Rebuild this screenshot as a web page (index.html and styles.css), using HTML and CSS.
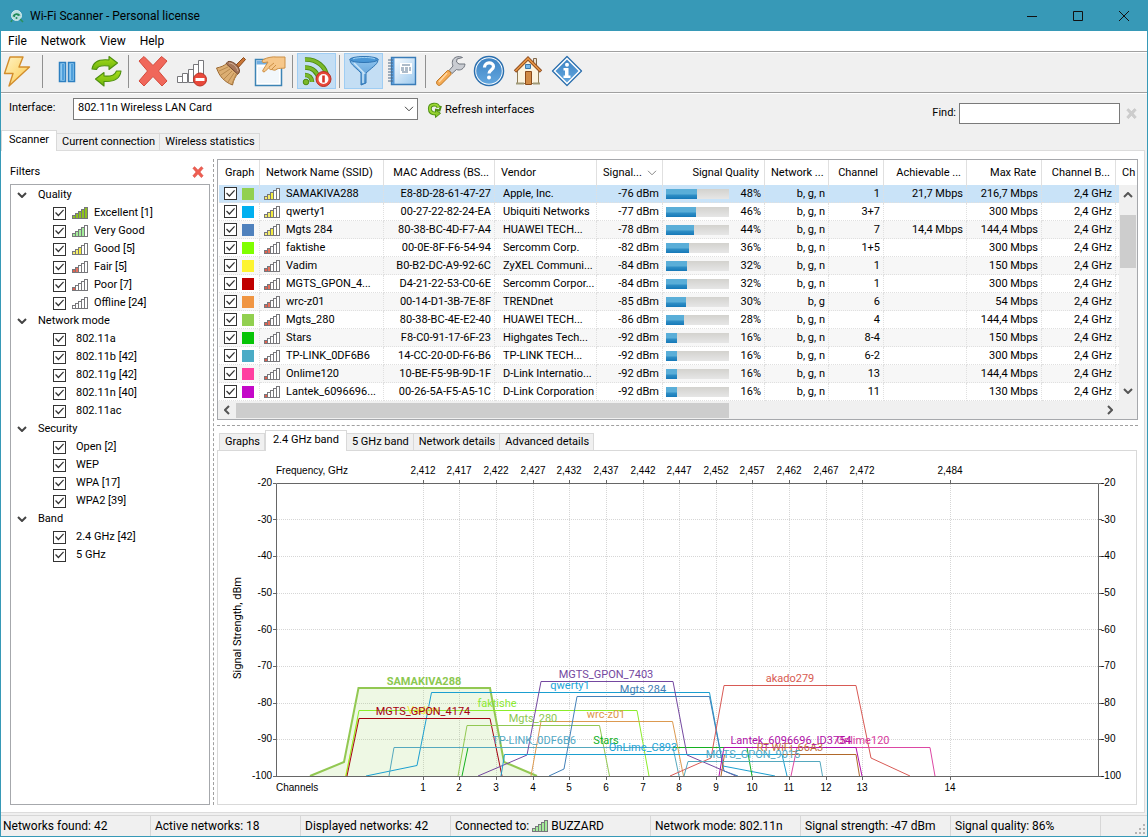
FILE: index.html
```html
<!DOCTYPE html>
<html lang="en">
<head>
<meta charset="utf-8">
<meta name="viewport" content="width=device-width, initial-scale=1">
<title>Wi-Fi Scanner - Personal license</title>
<link rel="stylesheet" href="styles.css">
</head>
<body>
<svg class="defs" width="0" height="0" aria-hidden="true">
  <defs>
    <linearGradient id="g-gold" x1="0" y1="0" x2="1" y2="1"><stop offset="0" stop-color="#fff3c4"/><stop offset="1" stop-color="#fbc848"/></linearGradient>
    <linearGradient id="g-blue" x1="0" y1="0" x2="0" y2="1"><stop offset="0" stop-color="#8fc4ee"/><stop offset="1" stop-color="#4f94d0"/></linearGradient>
    <linearGradient id="g-deep" x1="0" y1="0" x2="0" y2="1"><stop offset="0" stop-color="#3f84c4"/><stop offset="1" stop-color="#62a6de"/></linearGradient>
    <linearGradient id="g-green" x1="0" y1="0" x2="0" y2="1"><stop offset="0" stop-color="#a6dc1c"/><stop offset="1" stop-color="#6fb50c"/></linearGradient>
    <linearGradient id="g-page" x1="0" y1="0" x2="1" y2="1"><stop offset="0" stop-color="#fff"/><stop offset="1" stop-color="#9cc9ee"/></linearGradient>
    <symbol id="bars" viewBox="0 0 16 12">
      <g stroke="#77777b" stroke-width="1">
        <rect class="b1" x=".5" y="8.5" width="3" height="3"/>
        <rect class="b2" x="3.500" y="6.500" width="3" height="5"/>
        <rect class="b3" x="6.500" y="4.500" width="3" height="7"/>
        <rect class="b4" x="9.500" y="2.500" width="3" height="9"/>
        <rect class="b5" x="12.500" y=".5" width="3" height="11"/>
      </g>
    </symbol>
    <symbol id="cross" viewBox="0 0 32 32"><path d="M2 6 7 1.500l9 9 8.500-9L30 6l-8.500 10L30 26l-5 5-9-9.500L7 31l-5-5 8.500-10z" stroke-linejoin="round"/></symbol>
    <symbol id="chev" viewBox="0 0 10 6"><path d="M1 1l4 4 4-4" fill="none" stroke="currentColor" stroke-width="2"/></symbol>
    <symbol id="chev-thin" viewBox="0 0 10 6"><path d="M1 .8l4 4 4-4" fill="none" stroke="currentColor" stroke-width="1"/></symbol>
  </defs>
</svg>

<div class="window">
  <header class="titlebar">
    <svg class="app-icon" viewBox="0 0 14 14" aria-hidden="true"><circle cx="6.500" cy="6.500" r="5" fill="#b9dfe0" stroke="#d5ecef"/><path d="M3 7.500a4 4 0 0 1 7-1M4.500 8a2 2 0 0 1 4-1" fill="none" stroke="#1f8a58" stroke-width="1.200"/><circle cx="6.500" cy="9" r="1" fill="#1f8a58"/><path d="M2 11l-1 2M10 10l3 3" stroke="#2a8f5c" stroke-width="1.600"/></svg>
    <h1 class="title">Wi-Fi Scanner - Personal license</h1>
    <div class="caption-buttons">
      <button type="button" aria-label="Minimize"><svg width="12" height="12" viewBox="0 0 12 12"><path d="M1 6.500h10"/></svg></button>
      <button type="button" aria-label="Maximize"><svg width="12" height="12" viewBox="0 0 12 12"><path d="M1.500 1.500h9v9h-9z"/></svg></button>
      <button type="button" aria-label="Close"><svg width="12" height="12" viewBox="0 0 12 12"><path d="M1 1l10 10M11 1L1 11"/></svg></button>
    </div>
  </header>

  <nav class="menubar" aria-label="Main menu">
    <button type="button">File</button><button type="button">Network</button><button type="button">View</button><button type="button">Help</button>
  </nav>

  <div class="toolbar" role="toolbar" aria-label="Tools">
    <button type="button" class="tool first" aria-label="Start scan">
      <svg viewBox="0 0 32 32"><path d="M9 2h13l-4 10h10.500L8 31l4-12.500H3.500z" fill="url(#g-gold)" stroke="#d28d2c" stroke-width="1.400" stroke-linejoin="round"/></svg></button>
    <span class="sep"></span>
    <button type="button" class="tool" aria-label="Pause">
      <svg viewBox="0 0 32 32"><path d="M8.500 7.500h6v19h-6zM17.500 7.500h6v19h-6z" fill="#8cc8f0" stroke="#2d7fc0" stroke-width="1.500"/><path d="M12 9v16M21 9v16" stroke="#4f9fdb" stroke-width="2"/></svg></button>
    <button type="button" class="tool" aria-label="Refresh">
      <svg viewBox="0 0 32 32"><g fill="url(#g-green)" stroke="#4e8f0e" stroke-width="1.100" stroke-linejoin="round"><path d="M2 14C3 7 9 4 19 5V1.500L27.500 8 19 14.500V11C11 10 7.500 11 6.500 14.500z"/><path d="M31 16c-1 8-8 11-17 10.500V31l-8.500-7L14 17.500V21c8 .5 11-1 12.500-5z"/></g></svg></button>
    <span class="sep"></span>
    <button type="button" class="tool" aria-label="Delete"><svg viewBox="0 0 32 32" fill="#f0675a" stroke="#d44a3c" stroke-width="1"><use href="#cross"/></svg></button>
    <button type="button" class="tool" aria-label="Remove offline networks">
      <svg viewBox="0 0 32 32"><g fill="#fff" stroke="#77777b"><path d="M1.500 21.500h5v6h-5zM6.500 18.500h5v9h-5zM12.500 14.500h5v13h-5zM17.500 9.500h5v18h-5zM22.500 5.500h5v22h-5z"/></g><circle cx="24" cy="24.500" r="6.500" fill="#e8483a" stroke="#bc3124"/><path d="M19.500 23h9v3h-9z" fill="#fff"/></svg></button>
    <button type="button" class="tool" aria-label="Clear">
      <svg viewBox="0 0 32 32"><path d="M20 11 28.500 2.500l2 2L22 14z" fill="#c87536" stroke="#8a4a1c"/><path d="M12 8c-3 3-6 4-10.500 5 2 5 3 7 6 10.500 3 3 6 5 10 6.500 1-5 3-9 6-12z" fill="#dcae72" stroke="#9d6a32"/><path d="M4 16l9-4M6 20l9-6M9 24l8-8M13 27l6-9M17 29l4-10" stroke="#b8894e" fill="none"/><path d="M13 6.500c-1 1-1.500 1.500-1.500 2.500l11 10c1-.5 2-1.500 2-2.500.5-5-6.500-11-11.500-10z" fill="#a5765a" stroke="#71452c"/><path d="M14 8c4 0 8 4 9 8" stroke="#d8b49c" fill="none"/></svg></button>
    <button type="button" class="tool" aria-label="Properties">
      <svg viewBox="0 0 32 32"><path d="M1.500 4.500h26v26h-26z" fill="#fff" stroke="#3c84b5" stroke-width="1.500"/><path d="M2.500 5.500h24v4h-24z" fill="#72aee0"/><path d="M4 12h21v16H4z" fill="#f2f7fb"/><path d="M31 2v11c-3 .5-6 0-8 1-1.500 1.500-3 1.500-5 .5-2 .5-3-.5-3-2l-4 4c-1.500 1-3 0-2-1.500l5-8c-1 0-4 .8-5 .5-1.500-.5-1-2.500.5-3C13 2.500 19 1.500 22 2z" fill="#f6c78a" stroke="#cc8f45"/><path d="M15 12l5-4M18 14l4-4" stroke="#cc8f45" fill="none"/></svg></button>
    <span class="sep"></span>
    <button type="button" class="tool on" aria-pressed="true" aria-label="Live signal">
      <svg viewBox="0 0 32 32"><g fill="none" stroke="#4c8a10" stroke-width="4.600"><path d="M4 4.500C16 4 25 12 26 22"/><path d="M4 12.500c8 0 13 5 14 13"/><path d="M4 20c4 0 7 3 7 7"/></g><g fill="none" stroke="#79b82a" stroke-width="3"><path d="M4 4.500C16 4 25 12 26 22"/><path d="M4 12.500c8 0 13 5 14 13"/><path d="M4 20c4 0 7 3 7 7"/></g><circle cx="5" cy="27" r="2.800" fill="#79b82a" stroke="#4c8a10"/><circle cx="22.500" cy="24" r="7.500" fill="#e8483a" stroke="#b92d22"/><circle cx="22.500" cy="24" r="5" fill="#fff"/><path d="M21.200 20.500h2.600v7h-2.600z" fill="#d83327"/></svg></button>
    <span class="sep"></span>
    <button type="button" class="tool on" aria-pressed="true" aria-label="Filters">
      <svg viewBox="0 0 32 32"><path d="M2 4c0 5 3 6 11 14v12l5-2V18C27 10 30 9 30 4z" fill="url(#g-blue)" stroke="#2f74b3"/><path d="M6 8l10 10h-1V28" stroke="#cde6f8" stroke-width="1.500" fill="none"/><ellipse cx="16" cy="4.500" rx="14" ry="3" fill="#4a97d6" stroke="#2f74b3"/><path d="M5 3.800c6-1.800 17-1.800 22 0" stroke="#9ed0f2" fill="none"/></svg></button>
    <button type="button" class="tool" aria-label="Log">
      <svg viewBox="0 0 32 32"><path d="M4.500 2.500h24v27h-24z" fill="url(#g-page)" stroke="#3a7cb8" stroke-width="1.400"/><path d="M5 3h2.500v26H5z" fill="#5a9bd8"/><path d="M1 5h5M1 8h5M1 11h5M1 14h5M1 17h5M1 20h5M1 23h5M1 26h5" stroke="#4f6b86"/><path d="M13 8h12v11H13z" fill="#fff"/><path d="M15 10h8M14 13h3m1 0h3m1 0h2M14 15h3m1 0h3m1 0h2M15 17h6" stroke="#5c7894"/></svg></button>
    <span class="sep"></span>
    <button type="button" class="tool" aria-label="Settings">
      <svg viewBox="0 0 32 32"><path d="M28.500 2.500c-4-2-9-.5-10 3.500-.5 2 0 3.500.5 5l-4 4.500 3 3 4.500-4c3.500 1.500 8-.5 8.500-5.500h-6l-2.500-2 .5-3z" fill="#c9ccd2" stroke="#71767f"/><path d="M13.500 15.500c2 0 4 2 3.500 4L6.500 30c-2 1.500-5-1-3.500-4z" fill="#f5ab55" stroke="#bf7623"/><path d="M13 18L5 27" stroke="#ffd9a5" stroke-width="1.500"/></svg></button>
    <button type="button" class="tool" aria-label="Help">
      <svg viewBox="0 0 32 32"><circle cx="16" cy="16" r="14.500" fill="#fff" stroke="#2b6fae" stroke-width="1.500"/><circle cx="16" cy="16" r="12.800" fill="url(#g-deep)"/><path d="M11.500 12.500c0-6 9-6 9-1 0 3.500-4.500 3.500-4.500 7" fill="none" stroke="#fff" stroke-width="3.200"/><circle cx="16" cy="22.500" r="2" fill="#fff"/></svg></button>
    <button type="button" class="tool" aria-label="Home page">
      <svg viewBox="0 0 32 32"><path d="M21.500 3.500h3V12h-3z" fill="#e8dfd0" stroke="#80674a"/><path d="M5.500 14 16 4l10.500 10v14.500h-21z" fill="#fbf3df" stroke="#8e7a55"/><path d="M3 16.500 16 3.500l13 13" fill="none" stroke="#8c4b1f" stroke-width="3.400"/><path d="M3.500 16 16 3.500 28.500 16" fill="none" stroke="#e89543" stroke-width="1.600"/><path d="M13.500 9.500h5v4h-5z" fill="#78b7e8" stroke="#3a78aa"/><path d="M13.500 16.500h6v13h-6z" fill="#d08a45" stroke="#8a4b1b"/><path d="M4 28.500h8m9 0h7" stroke="#a09a78" stroke-width="2"/></svg></button>
    <button type="button" class="tool" aria-label="About">
      <svg viewBox="0 0 32 32"><path d="M16 1.500 30.500 16 16 30.500 1.500 16z" fill="#fff" stroke="#2b6fae" stroke-width="1.300" stroke-linejoin="round"/><path d="M16 4.500 27.500 16 16 27.500 4.500 16z" fill="url(#g-deep)"/><circle cx="16" cy="9.800" r="2" fill="#fff"/><path d="M12.500 13h5v7.500h2V23h-7v-2.500H14v-5h-1.500z" fill="#fff"/></svg></button>
  </div>

  <div class="ifacebar">
    <label for="iface" class="iface-label">Interface:</label>
    <div class="combo">
      <select id="iface"><option>802.11n Wireless LAN Card</option></select>
      <svg width="10" height="6" aria-hidden="true"><use href="#chev-thin"/></svg>
    </div>
    <button type="button" class="refresh">
      <svg width="15" height="16" viewBox="0 0 15 16" aria-hidden="true"><g fill="none" stroke="#4f8f14" stroke-width="3.800"><path d="M11.500 5.500C10.500 1.500 3 1.500 2.800 6.500c0 3 2 5 5.700 5"/></g><path d="M8 7.500l4.500 1 1.500-4.500" fill="none" stroke="#4f8f14" stroke-width="2"/><path d="M8.500 8v7.500l5-4.200z" fill="#8cc92a" stroke="#4f8f14" stroke-linejoin="round"/><path d="M11.500 5.500C10.500 1.500 3 1.500 2.800 6.500c0 3 2 5 6.200 5" fill="none" stroke="#9ad633" stroke-width="2"/></svg>
      Refresh interfaces</button>
    <label for="find" class="find-label">Find:</label>
    <input id="find" class="find" type="text">
    <button type="button" class="clear" aria-label="Clear search"><svg width="11" height="11" fill="#cdcdcd" stroke="#b9b9b9" stroke-width="1"><use href="#cross"/></svg></button>
  </div>

  <div class="tabs main-tabs" role="tablist">
    <button type="button" role="tab" aria-selected="true">Scanner</button><button type="button" role="tab" aria-selected="false">Current connection</button><button type="button" role="tab" aria-selected="false">Wireless statistics</button>
  </div>

  <main class="content">
    <aside class="filters">
      <div class="filters-head"><h2>Filters</h2><button type="button" aria-label="Close filters"><svg width="12" height="12" fill="#ee5e52" stroke="#cf463a" stroke-width="1"><use href="#cross"/></svg></button></div>
      <div class="tree">
        <div class="group"><svg width="10" height="6"><use href="#chev"/></svg>Quality</div>
        <label class="leaf"><input type="checkbox" checked><svg class="sig excellent"><use href="#bars"/></svg>Excellent [1]</label>
        <label class="leaf"><input type="checkbox" checked><svg class="sig verygood"><use href="#bars"/></svg>Very Good</label>
        <label class="leaf"><input type="checkbox" checked><svg class="sig good"><use href="#bars"/></svg>Good [5]</label>
        <label class="leaf"><input type="checkbox" checked><svg class="sig fair"><use href="#bars"/></svg>Fair [5]</label>
        <label class="leaf"><input type="checkbox" checked><svg class="sig poor"><use href="#bars"/></svg>Poor [7]</label>
        <label class="leaf"><input type="checkbox" checked><svg class="sig"><use href="#bars"/></svg>Offline [24]</label>
        <div class="group"><svg width="10" height="6"><use href="#chev"/></svg>Network mode</div>
        <label class="leaf plain"><input type="checkbox" checked>802.11a</label>
        <label class="leaf plain"><input type="checkbox" checked>802.11b [42]</label>
        <label class="leaf plain"><input type="checkbox" checked>802.11g [42]</label>
        <label class="leaf plain"><input type="checkbox" checked>802.11n [40]</label>
        <label class="leaf plain"><input type="checkbox" checked>802.11ac</label>
        <div class="group"><svg width="10" height="6"><use href="#chev"/></svg>Security</div>
        <label class="leaf plain"><input type="checkbox" checked>Open [2]</label>
        <label class="leaf plain"><input type="checkbox" checked>WEP</label>
        <label class="leaf plain"><input type="checkbox" checked>WPA [17]</label>
        <label class="leaf plain"><input type="checkbox" checked>WPA2 [39]</label>
        <div class="group"><svg width="10" height="6"><use href="#chev"/></svg>Band</div>
        <label class="leaf plain"><input type="checkbox" checked>2.4 GHz [42]</label>
        <label class="leaf plain"><input type="checkbox" checked>5 GHz</label>
      </div>
    </aside>

    <div class="vsplit"></div>

    <section class="detail">
      <div class="grid-box">
        <div class="grid-view">
          <table>
            <colgroup><col class="c-graph"><col class="c-ssid"><col class="c-mac"><col class="c-vendor"><col class="c-signal"><col class="c-quality"><col class="c-mode"><col class="c-channel"><col class="c-achiev"><col class="c-rate"><col class="c-band"><col></colgroup>
            <thead><tr><th>Graph</th><th>Network Name (SSID)</th><th class="r">MAC Address (BS...</th><th>Vendor</th><th><span class="sorted">Signal... <svg width="10" height="6"><use href="#chev-thin"/></svg></span></th><th class="r">Signal Quality</th><th class="r">Network ...</th><th class="r">Channel</th><th class="r">Achievable ...</th><th class="r">Max Rate</th><th class="r">Channel B...</th><th class="cut">Ch</th></tr></thead>
            <tbody>
              <tr class="selected"><td><span class="pick"><input type="checkbox" checked aria-label="SAMAKIVA288"><i class="sw green"></i></span></td><td><span class="name"><svg class="sig good"><use href="#bars"/></svg>SAMAKIVA288</span></td><td class="r">E8-8D-28-61-47-27</td><td>Apple, Inc.</td><td class="r">-76 dBm</td><td><span class="quality"><span class="track"><span class="fill" style="width:49%"></span></span>48%</span></td><td class="r">b, g, n</td><td class="r">1</td><td class="r">21,7 Mbps</td><td class="r">216,7 Mbps</td><td class="r">2,4 GHz</td><td></td></tr>
              <tr><td><span class="pick"><input type="checkbox" checked aria-label="qwerty1"><i class="sw sky"></i></span></td><td><span class="name"><svg class="sig good"><use href="#bars"/></svg>qwerty1</span></td><td class="r">00-27-22-82-24-EA</td><td>Ubiquiti Networks</td><td class="r">-77 dBm</td><td><span class="quality"><span class="track"><span class="fill" style="width:47%"></span></span>46%</span></td><td class="r">b, g, n</td><td class="r">3+7</td><td></td><td class="r">300 Mbps</td><td class="r">2,4 GHz</td><td></td></tr>
              <tr><td><span class="pick"><input type="checkbox" checked aria-label="Mgts 284"><i class="sw steel"></i></span></td><td><span class="name"><svg class="sig good"><use href="#bars"/></svg>Mgts 284</span></td><td class="r">80-38-BC-4D-F7-A4</td><td>HUAWEI TECH...</td><td class="r">-78 dBm</td><td><span class="quality"><span class="track"><span class="fill" style="width:44%"></span></span>44%</span></td><td class="r">b, g, n</td><td class="r">7</td><td class="r">14,4 Mbps</td><td class="r">144,4 Mbps</td><td class="r">2,4 GHz</td><td></td></tr>
              <tr><td><span class="pick"><input type="checkbox" checked aria-label="faktishe"><i class="sw lime"></i></span></td><td><span class="name"><svg class="sig fair"><use href="#bars"/></svg>faktishe</span></td><td class="r">00-0E-8F-F6-54-94</td><td>Sercomm Corp.</td><td class="r">-82 dBm</td><td><span class="quality"><span class="track"><span class="fill" style="width:36%"></span></span>36%</span></td><td class="r">b, g, n</td><td class="r">1+5</td><td></td><td class="r">300 Mbps</td><td class="r">2,4 GHz</td><td></td></tr>
              <tr><td><span class="pick"><input type="checkbox" checked aria-label="Vadim"><i class="sw yellow"></i></span></td><td><span class="name"><svg class="sig fair"><use href="#bars"/></svg>Vadim</span></td><td class="r">B0-B2-DC-A9-92-6C</td><td>ZyXEL Communi...</td><td class="r">-84 dBm</td><td><span class="quality"><span class="track"><span class="fill" style="width:33%"></span></span>32%</span></td><td class="r">b, g, n</td><td class="r">1</td><td></td><td class="r">150 Mbps</td><td class="r">2,4 GHz</td><td></td></tr>
              <tr><td><span class="pick"><input type="checkbox" checked aria-label="MGTS_GPON_4174"><i class="sw red"></i></span></td><td><span class="name"><svg class="sig fair"><use href="#bars"/></svg>MGTS_GPON_4...</span></td><td class="r">D4-21-22-53-C0-6E</td><td>Sercomm Corpor...</td><td class="r">-84 dBm</td><td><span class="quality"><span class="track"><span class="fill" style="width:33%"></span></span>32%</span></td><td class="r">b, g, n</td><td class="r">1</td><td></td><td class="r">300 Mbps</td><td class="r">2,4 GHz</td><td></td></tr>
              <tr><td><span class="pick"><input type="checkbox" checked aria-label="wrc-z01"><i class="sw orange"></i></span></td><td><span class="name"><svg class="sig fair"><use href="#bars"/></svg>wrc-z01</span></td><td class="r">00-14-D1-3B-7E-8F</td><td>TRENDnet</td><td class="r">-85 dBm</td><td><span class="quality"><span class="track"><span class="fill" style="width:31%"></span></span>30%</span></td><td class="r">b, g</td><td class="r">6</td><td></td><td class="r">54 Mbps</td><td class="r">2,4 GHz</td><td></td></tr>
              <tr><td><span class="pick"><input type="checkbox" checked aria-label="Mgts_280"><i class="sw green"></i></span></td><td><span class="name"><svg class="sig fair"><use href="#bars"/></svg>Mgts_280</span></td><td class="r">80-38-BC-4E-E2-40</td><td>HUAWEI TECH...</td><td class="r">-86 dBm</td><td><span class="quality"><span class="track"><span class="fill" style="width:28%"></span></span>28%</span></td><td class="r">b, g, n</td><td class="r">4</td><td></td><td class="r">144,4 Mbps</td><td class="r">2,4 GHz</td><td></td></tr>
              <tr><td><span class="pick"><input type="checkbox" checked aria-label="Stars"><i class="sw leafy"></i></span></td><td><span class="name"><svg class="sig poor"><use href="#bars"/></svg>Stars</span></td><td class="r">F8-C0-91-17-6F-23</td><td>Highgates Tech...</td><td class="r">-92 dBm</td><td><span class="quality"><span class="track"><span class="fill" style="width:17%"></span></span>16%</span></td><td class="r">b, g, n</td><td class="r">8-4</td><td></td><td class="r">150 Mbps</td><td class="r">2,4 GHz</td><td></td></tr>
              <tr><td><span class="pick"><input type="checkbox" checked aria-label="TP-LINK_0DF6B6"><i class="sw teal"></i></span></td><td><span class="name"><svg class="sig poor"><use href="#bars"/></svg>TP-LINK_0DF6B6</span></td><td class="r">14-CC-20-0D-F6-B6</td><td>TP-LINK TECH...</td><td class="r">-92 dBm</td><td><span class="quality"><span class="track"><span class="fill" style="width:17%"></span></span>16%</span></td><td class="r">b, g, n</td><td class="r">6-2</td><td></td><td class="r">300 Mbps</td><td class="r">2,4 GHz</td><td></td></tr>
              <tr><td><span class="pick"><input type="checkbox" checked aria-label="Onlime120"><i class="sw pink"></i></span></td><td><span class="name"><svg class="sig poor"><use href="#bars"/></svg>Onlime120</span></td><td class="r">10-BE-F5-9B-9D-1F</td><td>D-Link Internatio...</td><td class="r">-92 dBm</td><td><span class="quality"><span class="track"><span class="fill" style="width:17%"></span></span>16%</span></td><td class="r">b, g, n</td><td class="r">13</td><td></td><td class="r">144,4 Mbps</td><td class="r">2,4 GHz</td><td></td></tr>
              <tr><td><span class="pick"><input type="checkbox" checked aria-label="Lantek_6096696_ID3754"><i class="sw violet"></i></span></td><td><span class="name"><svg class="sig poor"><use href="#bars"/></svg>Lantek_6096696...</span></td><td class="r">00-26-5A-F5-A5-1C</td><td>D-Link Corporation</td><td class="r">-92 dBm</td><td><span class="quality"><span class="track"><span class="fill" style="width:17%"></span></span>16%</span></td><td class="r">b, g, n</td><td class="r">11</td><td></td><td class="r">130 Mbps</td><td class="r">2,4 GHz</td><td></td></tr>
            </tbody>
          </table>
          <div class="vscroll"><svg class="up" width="10" height="6"><use href="#chev"/></svg><span class="vtrack"><span class="vthumb"></span></span><svg width="10" height="6"><use href="#chev"/></svg></div>
        </div>
        <div class="hscroll"><svg class="left" width="10" height="6"><use href="#chev"/></svg><span class="htrack"><span class="hthumb"></span></span><svg class="right" width="10" height="6"><use href="#chev"/></svg></div>
      </div>

      <div class="hsplit"></div>

      <div class="tabs sub-tabs" role="tablist">
        <button type="button" role="tab" aria-selected="false">Graphs</button><button type="button" role="tab" aria-selected="true">2.4 GHz band</button><button type="button" role="tab" aria-selected="false">5 GHz band</button><button type="button" role="tab" aria-selected="false">Network details</button><button type="button" role="tab" aria-selected="false">Advanced details</button>
      </div>

      <div class="chart-panel">
        <svg class="chart" viewBox="218 451 918 352" preserveAspectRatio="xMidYMin meet" role="img" aria-label="Signal strength by channel in the 2.4 GHz band">
          <path class="gridline" d="M277 519.500H1098M277 556.500H1098M277 593.500H1098M277 629.500H1098M277 666.500H1098M277 703.500H1098M277 739.500H1098M423.500 484V776M459.500 484V776M496.500 484V776M533.500 484V776M569.500 484V776M606.500 484V776M643.500 484V776M679.500 484V776M716.500 484V776M752.500 484V776M789.500 484V776M826.500 484V776M862.500 484V776M950.500 484V776"/>
          <path class="axis" d="M276.500 483.500H1098.500V776.500H276.500ZM423.500 480V483M459.500 480V483M496.500 480V483M533.500 480V483M569.500 480V483M606.500 480V483M643.500 480V483M679.500 480V483M716.500 480V483M752.500 480V483M789.500 480V483M826.500 480V483M862.500 480V483M950.500 480V483M423.500 777v3M459.500 777v3M496.500 777v3M533.500 777v3M569.500 777v3M606.500 777v3M643.500 777v3M679.500 777v3M716.500 777v3M752.500 777v3M789.500 777v3M826.500 777v3M862.500 777v3M950.500 777v3M273 483.500h3M273 519.500h3M273 556.500h3M273 593.500h3M273 629.500h3M273 666.500h3M273 703.500h3M273 739.500h3M273 776.500h3M1099 483.500h3M1099 519.500h3M1099 556.500h3M1099 593.500h3M1099 629.500h3M1099 666.500h3M1099 703.500h3M1099 739.500h3M1099 776.500h3"/>
          <g class="curve">
            <path class="k-green strong" d="M310 776L344 762 358.500 688H490L504 762 537 776"/>
            <path class="k-sky" d="M366 776L417 765.500 431.500 692.500H709.500L723 766 775 776"/>
            <path class="k-yellow" d="M345.500 776L358 718.500"/>
            <path class="k-lime" d="M346 776L359 710.500H637L649 776"/>
            <path class="k-red" d="M347 776L359 718.500H490L502 776"/>
            <path class="k-green" d="M458 776L467 725.500H599.500L609.500 776"/>
            <path class="k-leafy" d="M462 776L468 747.500H747L752 776"/>
            <path class="k-teal" d="M389 776L394 747.500H673L679 776"/>
            <path class="k-purple" d="M478 776L527 755 541 681.500H673L687 755 736 776"/>
            <path class="k-orange" d="M531 776L541 721.500H672.500L683.500 776"/>
            <path class="k-steel" d="M549 776L564 769 577 696.500H709.500L724 771 738 776"/>
            <path class="k-akado" d="M670 776L711 758 724 685.500H856L871 758 910 776"/>
            <path class="k-brown" d="M721 776L724.500 754.500H856L859.500 776"/>
            <path class="k-sky" d="M501 776L504.500 754.500H782L787 776"/>
            <path class="k-teal" d="M684 776L688 761.500H820L822.500 776"/>
            <path class="k-pink" d="M791 776L797 747.500H930L935 776"/>
            <path class="k-violet" d="M719 776L724 747.500H856L862 776"/>
          </g>
          <path class="axis" d="M276 776.500H1099"/>
          <g class="net">
            <text class="t-yellow" x="423" y="714">Vadim</text>
            <text class="t-green bold" x="424" y="685">SAMAKIVA288</text>
            <text class="t-lime" x="497" y="707">faktishe</text>
            <text class="t-red" x="423" y="715">MGTS_GPON_4174</text>
            <text class="t-purple" x="606" y="678">MGTS_GPON_7403</text>
            <text class="t-sky" x="570" y="689">qwerty1</text>
            <text class="t-steel" x="643" y="693">Mgts 284</text>
            <text class="t-akado" x="790" y="682">akado279</text>
            <text class="t-green" x="533" y="722">Mgts_280</text>
            <text class="t-orange" x="606" y="718">wrc-z01</text>
            <text class="t-teal" x="534" y="744">TP-LINK_0DF6B6</text>
            <text class="t-leafy" x="606" y="744">Stars</text>
            <text class="t-sky" x="643" y="751">OnLime_C893</text>
            <text class="t-brown" x="790" y="751">RT-WiFi_66A3</text>
            <text class="t-teal" x="753" y="758">MGTS_GPON_9015</text>
            <text class="t-pink" x="863" y="744">Onlime120</text>
            <text class="t-violet" x="791" y="744">Lantek_6096696_ID3754</text>
          </g>
          <g class="ticks">
            <text x="276" y="474">Frequency, GHz</text><text x="276" y="791">Channels</text>
          </g>
          <g class="ticks mid">
            <text x="423" y="474">2,412</text><text x="459" y="474">2,417</text><text x="496" y="474">2,422</text><text x="533" y="474">2,427</text><text x="569" y="474">2,432</text><text x="606" y="474">2,437</text><text x="643" y="474">2,442</text><text x="679" y="474">2,447</text><text x="716" y="474">2,452</text><text x="752" y="474">2,457</text><text x="789" y="474">2,462</text><text x="826" y="474">2,467</text><text x="862" y="474">2,472</text><text x="950" y="474">2,484</text>
            <text x="423" y="791">1</text><text x="459" y="791">2</text><text x="496" y="791">3</text><text x="533" y="791">4</text><text x="569" y="791">5</text><text x="606" y="791">6</text><text x="643" y="791">7</text><text x="679" y="791">8</text><text x="716" y="791">9</text><text x="752" y="791">10</text><text x="789" y="791">11</text><text x="826" y="791">12</text><text x="862" y="791">13</text><text x="950" y="791">14</text>
          </g>
          <g class="ticks end">
            <text x="272" y="486">-20</text><text x="272" y="523">-30</text><text x="272" y="559">-40</text><text x="272" y="596">-50</text><text x="272" y="633">-60</text><text x="272" y="669">-70</text><text x="272" y="706">-80</text><text x="272" y="742">-90</text><text x="272" y="779">-100</text>
          </g>
          <g class="ticks">
            <text x="1101" y="486">-20</text><text x="1101" y="523">-30</text><text x="1101" y="559">-40</text><text x="1101" y="596">-50</text><text x="1101" y="633">-60</text><text x="1101" y="669">-70</text><text x="1101" y="706">-80</text><text x="1101" y="742">-90</text><text x="1101" y="779">-100</text>
          </g>
          <text class="ylabel" transform="translate(241 628) rotate(-90)">Signal Strength, dBm</text>
        </svg>
      </div>
    </section>
  </main>

  <footer class="status">
    <span>Networks found: 42</span><span>Active networks: 18</span><span>Displayed networks: 42</span><span class="wide">Connected to: <svg class="sig verygood full"><use href="#bars"/></svg> BUZZARD</span><span>Network mode: 802.11n</span><span>Signal strength: -47 dBm</span><span>Signal quality: 86%</span>
    <svg class="grip" width="10" height="10" viewBox="0 0 10 10" aria-hidden="true"><path d="M8 0h2v2H8zM8 4h2v2H8zM8 8h2v2H8zM4 4h2v2H4zM4 8h2v2H4zM0 8h2v2H0z" fill="#b4b4b4"/></svg>
  </footer>
</div>
</body>
</html>
```
FILE: styles.css
```css
* { box-sizing: border-box; }
body { margin: 0; font: 11px/16px Roboto, "Liberation Sans", sans-serif; color: #000; }
button { border: 0; padding: 0; margin: 0; background: none; font: inherit; color: inherit; }
h1, h2 { margin: 0; font: inherit; }
svg { display: block; flex: none; }
.defs { position: absolute; }

.window { display: flex; flex-direction: column; min-height: 100vh; background: #f0f0f0; border: 1px solid #3799b7; border-top: 0; }

/* caption and menu */
.titlebar { display: flex; align-items: center; height: 31px; padding-left: 9px; background: #3799b7; font-size: 12px; }
.app-icon { width: 14px; height: 14px; margin-right: 6px; }
.title { flex: 1; }
.caption-buttons { display: flex; }
.caption-buttons button { display: grid; place-items: center; width: 46px; height: 31px; }
.caption-buttons svg { fill: none; stroke: #111; stroke-width: 1; }
.menubar { display: flex; gap: 14px; height: 20px; padding-left: 7px; background: #fff; font-size: 12px; }

/* toolbar */
.toolbar { display: flex; align-items: center; height: 42px; padding-bottom: 2px; border-top: 1px solid #a0a0a0; border-bottom: 1px solid #a0a0a0; box-shadow: inset 0 1px #fff, 0 1px #fff; }
.tool { display: grid; place-items: center; width: 39px; height: 36px; }
.tool.first { place-items: center start; width: 38px; }
.tool svg { width: 32px; height: 32px; }
.tool.on { background: #c4def4; border: 1px solid #9fcdf3; }
.sep { width: 1px; height: 33px; margin: 0 4px 0 3px; background: #909090; }

/* interface row */
.ifacebar { display: flex; align-items: flex-start; height: 37px; padding: 5px 7px 0 8px; }
.iface-label { width: 64px; padding-top: 2px; }
.combo { display: grid; align-items: center; width: 345px; height: 22px; margin-right: 9px; }
.combo select { grid-area: 1 / 1; width: 100%; height: 22px; padding: 0 4px 2px; appearance: none; border: 1px solid #7a7a7a; border-radius: 0; background: #fff; font: inherit; color: #000; }
.combo svg { grid-area: 1 / 1; justify-self: end; margin-right: 4px; color: #444; pointer-events: none; }
.refresh { display: flex; align-items: center; gap: 3px; height: 24px; }
.find-label { margin-left: auto; padding: 7px 3px 0 0; }
.find { width: 161px; height: 21px; margin-top: 5px; border: 1px solid #7a7a7a; background: #fff; font: inherit; }
.clear { margin: 10px 3px 0 6px; }

/* tabs */
.tabs { display: flex; align-items: flex-end; position: relative; height: 20px; }
.tabs button { height: 17px; padding: 0 4px 0 5px; background: #f0f0f0; border: 1px solid #d9d9d9; border-width: 1px 1px 0 0; line-height: 16px; }
.tabs button[aria-selected="true"] { height: 21px; margin-bottom: -1px; padding: 0 7px 3px; background: #fff; border-left-width: 1px; z-index: 1; }

/* content */
.content { flex: 1; display: flex; padding: 8px 6px 7px 9px; margin-right: 2px; background: #fff; border: 1px solid #dcdcdc; border-left: 0; }
.filters { display: flex; flex-direction: column; width: 200px; }
.filters-head { display: flex; justify-content: space-between; align-items: center; height: 25px; padding-right: 6px; }
.tree { flex: 1; padding-top: 1px; border: 1px solid #a6a8ac; }
.group, .leaf { display: flex; align-items: center; height: 18px; }
.group { padding-left: 6px; gap: 11px; }
.group svg { color: #444; }
.leaf { padding-left: 42px; gap: 6px; }
.leaf.plain { gap: 10px; }
input[type="checkbox"] { appearance: none; flex: none; width: 13px; height: 13px; margin: 0; border: 1px solid #333; background: #fff; }
input[type="checkbox"]:checked::after { content: ""; display: block; height: 11px; background: #333; clip-path: polygon(10% 50%, 18% 41%, 40% 64%, 83% 18%, 91% 26%, 40% 81%); }
.vsplit { width: 0; margin: 0 3px; border-left: 1px dashed #a0a0a0; }

.sig { width: 16px; height: 12px; }
.b1 { fill: var(--b1, #fff); }
.b2 { fill: var(--b2, #fff); }
.b3 { fill: var(--b3, #fff); }
.b4 { fill: var(--b4, #fff); }
.b5 { fill: var(--b5, #fff); }
.poor { --b1: #e2604f; }
.fair { --b1: #e2604f; --b2: #e8705c; }
.good { --b1: #f5ee6e; --b2: #f5ee6e; --b3: #f5ee40; }
.verygood { --b1: #a4ec9a; --b2: #a4ec9a; --b3: #a4ec9a; --b4: #a4ec9a; }
.verygood.full { --b5: #a4ec9a; }
.excellent { --b1: #8fc31f; --b2: #8fc31f; --b3: #8fc31f; --b4: #8fc31f; --b5: #8fc31f; }

/* network table */
.detail { flex: 1; min-width: 0; display: flex; flex-direction: column; }
.grid-box { border: 1px solid #a6a8ac; }
.grid-view { position: relative; padding-left: 1px; overflow: hidden; }
table { width: 100%; table-layout: fixed; border-spacing: 0; }
.c-graph { width: 41px; }
.c-ssid { width: 124px; }
.c-mac { width: 111px; }
.c-vendor { width: 102px; }
.c-signal { width: 66px; }
.c-quality { width: 102px; }
.c-mode { width: 64px; }
.c-channel { width: 55px; }
.c-achiev { width: 83px; }
.c-rate { width: 75px; }
.c-band { width: 74px; }
th, td { padding: 0; text-align: left; white-space: nowrap; font-weight: normal; }
th { height: 25px; padding: 0 5px 0 6px; border-right: 1px solid #e0e0e0; }
th.cut { overflow: hidden; border: 0; }
td { height: 18px; padding: 0 3px 0 8px; line-height: 16px; border-right: 1px dotted #e0e0e0; border-bottom: 1px dotted #e0e0e0; }
td:nth-child(1) { padding-left: 5px; }
td:nth-child(2) { padding-left: 4px; }
td:nth-child(6) { padding-left: 3px; }
tr:nth-child(odd) td { background: #f7f7f7; }
tr.selected td { background: #c9e3f8; }
.r { text-align: right; }
.sorted { display: flex; align-items: center; justify-content: space-between; color: #000; }
.sorted svg { color: #888; }
.pick, .name, .quality { display: flex; align-items: center; }
.pick { gap: 5px; }
.name { gap: 6px; }
.quality { justify-content: space-between; }
.track { width: 63px; height: 10px; background: linear-gradient(#d3d2ce, #e6e6e6); }
.fill { display: block; height: 10px; background: linear-gradient(#5aaed8 50%, #2f8fc6 60%, #1578b8 100%); }
.sw { width: 12px; height: 12px; }
.sw.green { background: #92d050; }
.sw.sky { background: #00b0f0; }
.sw.steel { background: #4f81bd; }
.sw.lime { background: #80ff00; }
.sw.yellow { background: #fdf431; }
.sw.red { background: #c00000; }
.sw.orange { background: #f09542; }
.sw.leafy { background: #06c406; }
.sw.teal { background: #4bacc6; }
.sw.pink { background: #ff3fa0; }
.sw.violet { background: #c408c8; }
.vscroll { position: absolute; top: 25px; right: 0; bottom: 0; width: 18px; display: flex; flex-direction: column; align-items: center; padding: 7px 0; background: #f0f0f0; color: #555; }
.vtrack { flex: 1; width: 16px; margin: 7px 0; padding-top: 10px; }
.vthumb { display: block; height: 53px; background: #cdcdcd; }
.up { transform: rotate(180deg); }
.left { transform: rotate(90deg); }
.right { transform: rotate(-90deg); }
.hscroll { display: flex; align-items: center; height: 18px; padding: 0 22px 0 4px; background: #f0f0f0; color: #555; }
.htrack { flex: 1; margin: 0 4px; }
.hthumb { display: block; width: 57%; height: 15px; background: #cdcdcd; }

.hsplit { height: 10px; }
.hsplit::before { content: ""; display: block; padding-top: 5px; border-bottom: 1px dashed #a0a0a0; }
.sub-tabs { padding-left: 2px; }
.sub-tabs button:first-child { border-left-width: 1px; }

/* chart */
.chart-panel { flex: 1; margin-right: 1px; background: #fff; border: 1px solid #d9d9d9; }
.chart { width: 100%; height: auto; font-family: "Liberation Sans", Arial, sans-serif; }
.gridline { fill: none; stroke: #d6d6d6; stroke-dasharray: 1 1; }
.axis { fill: none; stroke: #666; }
.curve path { fill: none; stroke-width: 1; }
.k-green { stroke: #92c852; }
.curve .strong { fill: #92d05028; stroke-width: 2; }
.k-sky { stroke: #1b9fd0; }
.k-yellow { stroke: #eee43a; }
.k-lime { stroke: #8cec2a; }
.k-red { stroke: #a50010; }
.k-leafy { stroke: #14b020; }
.k-teal { stroke: #55a8be; }
.k-purple { stroke: #7448a0; }
.k-orange { stroke: #dc9a50; }
.k-steel { stroke: #4380b8; }
.k-akado { stroke: #d85a55; }
.k-brown { stroke: #b0682a; }
.k-pink { stroke: #dc48a4; }
.k-violet { stroke: #b010a8; }
.net text { font-family: Roboto, "Liberation Sans", sans-serif; font-size: 11px; text-anchor: middle; }
.bold { font-weight: bold; }
.t-green { fill: #8cc850; }
.t-yellow { fill: #f4ea40; }
.t-lime { fill: #8ce830; }
.t-red { fill: #a50010; }
.t-purple { fill: #7448a0; }
.t-sky { fill: #20a4d8; }
.t-steel { fill: #4680b4; }
.t-akado { fill: #d85a50; }
.t-orange { fill: #dc9648; }
.t-teal { fill: #52a8c4; }
.t-leafy { fill: #10b01c; }
.t-brown { fill: #c0703c; }
.t-pink { fill: #d83c9c; }
.t-violet { fill: #b010a8; }
.ticks { font-size: 10px; }
.mid { text-anchor: middle; }
.end { text-anchor: end; }
.ylabel { font-family: Roboto, "Liberation Sans", sans-serif; font-size: 11px; text-anchor: middle; }

/* status bar */
.status { display: flex; align-items: stretch; height: 21px; margin-top: 2px; border-top: 1px solid #d7d7d7; font-size: 12px; }
.status span { display: flex; align-items: center; gap: 3px; flex: 0 0 150px; padding-left: 4px; border-right: 1px solid #d7d7d7; white-space: nowrap; }
.status span:first-child { padding-left: 2px; }
.status .wide { flex-basis: 200px; }
.grip { margin: auto 2px 2px auto; }
```
